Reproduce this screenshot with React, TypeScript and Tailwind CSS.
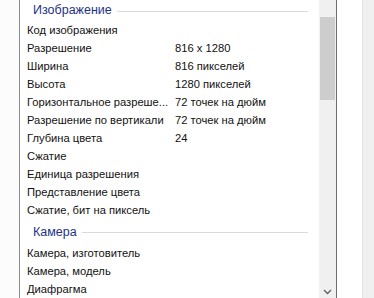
const imageRows: [string, string][] = [
  ["Код изображения", ""],
  ["Разрешение", "816 x 1280"],
  ["Ширина", "816 пикселей"],
  ["Высота", "1280 пикселей"],
  ["Горизонтальное разреше...", "72 точек на дюйм"],
  ["Разрешение по вертикали", "72 точек на дюйм"],
  ["Глубина цвета", "24"],
  ["Сжатие", ""],
  ["Единица разрешения", ""],
  ["Представление цвета", ""],
  ["Сжатие, бит на пиксель", ""],
];

const cameraRows: [string, string][] = [
  ["Камера, изготовитель", ""],
  ["Камера, модель", ""],
  ["Диафрагма", ""],
];

function GroupHeader({ title, className }: { title: string; className: string }) {
  return (
    <div className={`flex items-center pl-[13px] pr-[11px] ${className}`}>
      <span className="text-[12.5px] text-[#1e3287] whitespace-nowrap">{title}</span>
      <div className="flex-1 h-px bg-[#d6dbe3] ml-[5px] mt-[1px]" />
    </div>
  );
}

function Row({ name, value }: { name: string; value: string }) {
  return (
    <div className="flex h-[18px] items-center pl-[7px] text-[11.2px] text-[#111]">
      <div className="w-[148px] shrink-0 whitespace-nowrap">{name}</div>
      <div className="whitespace-nowrap">{value}</div>
    </div>
  );
}

export default function App() {
  return (
    <div
      className="w-[374px] h-[298px] flex bg-white overflow-hidden"
      style={{ fontFamily: '"Segoe UI", "Liberation Sans", Arial, sans-serif' }}
    >
      <div className="w-[19px] shrink-0 bg-[#fcfcfc]" />
      <div className="w-px shrink-0 bg-[#8c8c8c]" />

      {/* list */}
      <div className="w-[299px] shrink-0 flex flex-col">
        <GroupHeader title="Изображение" className="h-[21px]" />
        {imageRows.map(([n, v]) => (
          <Row key={n} name={n} value={v} />
        ))}
        <GroupHeader title="Камера" className="h-[24px] mt-[1px]" />
        {cameraRows.map(([n, v]) => (
          <Row key={n} name={n} value={v} />
        ))}
      </div>

      {/* scrollbar */}
      <div className="w-[17px] shrink-0 bg-[#f0f0f0] flex flex-col items-center">
        <div className="h-[17px]" />
        <div className="w-[15px] h-[83px] bg-[#cdcdcd]" />
        <div className="flex-1" />
        <svg width="9" height="6" viewBox="0 0 9 6" className="mb-[3px]">
          <path d="M1 1 L4.5 4.5 L8 1" fill="none" stroke="#606060" strokeWidth="1.3" />
        </svg>
      </div>
      <div className="w-px shrink-0 bg-[#6e6e6e]" />

      <div className="w-[25px] shrink-0 bg-white" />
      <div className="w-px shrink-0 bg-[#e3e3e3]" />
      <div className="flex-1 bg-[#f0f0f0]" />
    </div>
  );
}
